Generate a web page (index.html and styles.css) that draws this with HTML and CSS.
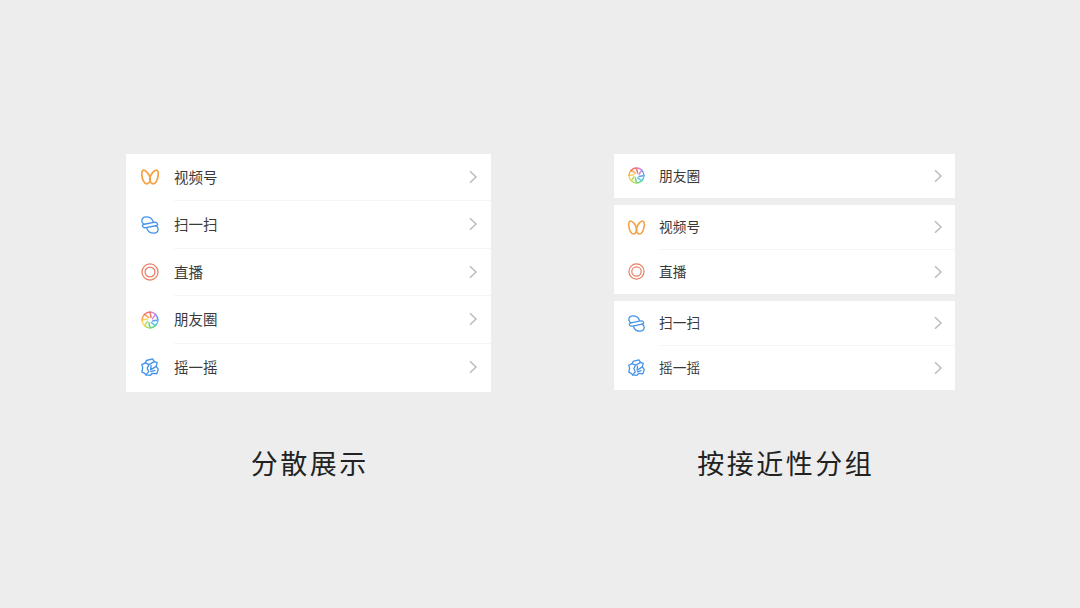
FILE: index.html
```html
<!DOCTYPE html>
<html lang="zh">
<head>
<meta charset="utf-8">
<title>分散展示与按接近性分组</title>
<link rel="stylesheet" href="styles.css">
</head>
<body>
<svg class="defs" aria-hidden="true">
  <symbol id="i-video" viewBox="0 0 20 20">
    <path class="orange" d="M3 2.400C1 2.400.6 5.500.9 8 1.400 12.500 3.500 17.600 6.300 17.600 9.200 17.600 11 14.200 10 10.600 9 7 5.500 2.400 3 2.400Z"/>
    <path class="orange" d="M17 2.400C19 2.400 19.400 5.500 19.100 8 18.600 12.500 16.500 17.600 13.700 17.600 10.800 17.600 9 14.200 10 10.600 11 7 14.500 2.400 17 2.400Z"/>
  </symbol>
  <symbol id="i-scan" viewBox="0 0 20 20">
    <path class="blue" d="M13.500 6.200C12.500 3 9.300.9 5.700.9 2.700.9.700 3 1 5.800 1.200 7.500 2.300 8.700 3.500 9.200"/>
    <path class="blue" d="M3.500 9.200 14.500 7C17 6.600 18.500 7.800 18.400 9.300 18.300 10.200 17.600 10.600 16.500 10.800L5.500 13C3 13.400 1.500 12.200 1.600 10.700 1.700 9.900 2.400 9.400 3.500 9.200Z"/>
    <path class="blue" d="M6.500 13.800C7.500 17 10.700 19.100 14.300 19.100 17.300 19.100 19.300 17 19 14.200 18.800 12.500 17.700 11.300 16.500 10.800"/>
  </symbol>
  <symbol id="i-live" viewBox="0 0 20 20">
    <circle class="coral" cx="10" cy="10" r="8.900"/>
    <circle class="coral" cx="10" cy="10" r="5.500"/>
  </symbol>
  <symbol id="i-moments" viewBox="0 0 20 20">
    <path class="seg c1" d="M10 1.200A8.800 8.800 0 0 1 16.200 3.800L12.800 8.500"/>
    <path class="seg c2" d="M16.200 3.800A8.800 8.800 0 0 1 18.800 10L13 11.200"/>
    <path class="seg c3" d="M18.800 10A8.800 8.800 0 0 1 16.200 16.200L11.500 12.800"/>
    <path class="seg c4" d="M16.200 16.200A8.800 8.800 0 0 1 10 18.800L8.800 13"/>
    <path class="seg c5" d="M10 18.800A8.800 8.800 0 0 1 3.800 16.200L7.200 11.500"/>
    <path class="seg c6" d="M3.800 16.200A8.800 8.800 0 0 1 1.200 10L7 8.800"/>
    <path class="seg c7" d="M1.200 10A8.800 8.800 0 0 1 3.800 3.800L8.500 7.200"/>
    <path class="seg c8" d="M3.800 3.800A8.800 8.800 0 0 1 10 1.200L11.200 7"/>
  </symbol>
  <symbol id="i-shake" viewBox="0 0 20 20">
    <path class="blue" d="M6 2.800 12.800.9 14.800 4 18 5.200 16.800 9.300 19.200 12.400 17.500 17.500 12.400 17 10.500 19.200 5.500 18.800 3.600 16.700 1 15.700 1.900 10.700.9 7.300 4.900 5.400Z"/>
    <path class="blue" d="M4.900 5.400 8.900 7.300 14.800 4"/>
    <path class="blue" d="M8.900 7.300 6.900 11.300 8.600 15.200 5.500 18.800"/>
    <path class="blue" d="M11.200 8.400 10.700 13.200 16.800 9.300"/>
    <path class="blue" d="M11 15.200 15.500 13.800"/>
  </symbol>
  <symbol id="i-chevron" viewBox="0 0 10 14">
    <path class="chevron-line" d="M2 1.200 8 7 2 12.800"/>
  </symbol>
</svg>

<main class="stage">
  <section class="panel panel-wide">
    <div class="group">
      <div class="row"><svg class="icon"><use href="#i-video"/></svg><div class="row-body"><span class="label">视频号</span><svg class="chevron"><use href="#i-chevron"/></svg></div></div>
      <div class="row"><svg class="icon"><use href="#i-scan"/></svg><div class="row-body"><span class="label">扫一扫</span><svg class="chevron"><use href="#i-chevron"/></svg></div></div>
      <div class="row"><svg class="icon"><use href="#i-live"/></svg><div class="row-body"><span class="label">直播</span><svg class="chevron"><use href="#i-chevron"/></svg></div></div>
      <div class="row"><svg class="icon"><use href="#i-moments"/></svg><div class="row-body"><span class="label">朋友圈</span><svg class="chevron"><use href="#i-chevron"/></svg></div></div>
      <div class="row"><svg class="icon"><use href="#i-shake"/></svg><div class="row-body"><span class="label">摇一摇</span><svg class="chevron"><use href="#i-chevron"/></svg></div></div>
    </div>
    <h2 class="caption">分散展示</h2>
  </section>

  <section class="panel panel-narrow">
    <div class="groups">
      <div class="group">
        <div class="row"><svg class="icon"><use href="#i-moments"/></svg><div class="row-body"><span class="label">朋友圈</span><svg class="chevron"><use href="#i-chevron"/></svg></div></div>
      </div>
      <div class="group">
        <div class="row"><svg class="icon"><use href="#i-video"/></svg><div class="row-body"><span class="label">视频号</span><svg class="chevron"><use href="#i-chevron"/></svg></div></div>
        <div class="row"><svg class="icon"><use href="#i-live"/></svg><div class="row-body"><span class="label">直播</span><svg class="chevron"><use href="#i-chevron"/></svg></div></div>
      </div>
      <div class="group">
        <div class="row"><svg class="icon"><use href="#i-scan"/></svg><div class="row-body"><span class="label">扫一扫</span><svg class="chevron"><use href="#i-chevron"/></svg></div></div>
        <div class="row"><svg class="icon"><use href="#i-shake"/></svg><div class="row-body"><span class="label">摇一摇</span><svg class="chevron"><use href="#i-chevron"/></svg></div></div>
      </div>
    </div>
    <h2 class="caption">按接近性分组</h2>
  </section>
</main>
</body>
</html>
```

FILE: styles.css
```css
* { box-sizing: border-box; }

html, body {
  margin: 0;
  width: 1080px;
  height: 608px;
  overflow: hidden;
  background: #ededed;
  font-family: "Noto Sans CJK SC", "Liberation Sans", sans-serif;
}

.defs { display: none; }

.stage {
  display: flex;
  gap: 123px;
  padding: 153.5px 0 0 126px;
}

.panel { display: flex; flex-direction: column; }
.panel-wide { width: 365px; --row: 47.5px; --icon: 18px; --inset: 15px; --text-gap: 15px; --font: 14.5px; --chev-right: 13px; --caption-top: 51px; }
.panel-wide .group { padding-bottom: 1px; }
.panel-narrow { width: 341px; --row: 44.5px; --icon: 17px; --inset: 14px; --text-gap: 14px; --font: 13.7px; --chev-right: 12.5px; --caption-top: 52.5px; }

.groups { display: flex; flex-direction: column; gap: 7px; }

.group { background: #fff; }

.row {
  display: flex;
  align-items: center;
  height: var(--row);
  padding-left: var(--inset);
}

.icon {
  flex: none;
  width: var(--icon);
  height: var(--icon);
  margin-right: var(--text-gap);
}

.row-body {
  flex: 1;
  height: 100%;
  display: flex;
  align-items: center;
  justify-content: space-between;
  padding-right: var(--chev-right);
  border-bottom: 1px solid #f5f5f5;
}

.row:last-child .row-body { border-bottom: 0; }

.label {
  font-size: var(--font);
  color: #3a3a3a;
  line-height: 1;
}

.chevron { flex: none; width: 10px; height: 14px; }

.chevron-line {
  fill: none;
  stroke: #bcbcbc;
  stroke-width: 1.5;
}

.orange, .blue, .coral, .seg {
  fill: none;
  stroke-linejoin: round;
  stroke-linecap: round;
}
.orange { stroke: #f5a145; stroke-width: 1.9; }
.blue { stroke: #4493ea; stroke-width: 1.5; }
.coral { stroke: #ea7d64; stroke-width: 1.4; }
.seg { stroke-width: 1.7; }
.c1 { stroke: #d584dc; }
.c2 { stroke: #6f9cf2; }
.c3 { stroke: #52c8e6; }
.c4 { stroke: #62d68a; }
.c5 { stroke: #b2e05c; }
.c6 { stroke: #f8d55c; }
.c7 { stroke: #f8a552; }
.c8 { stroke: #f27470; }

.caption {
  margin: var(--caption-top) 0 0;
  padding-left: 2.5px;
  text-align: center;
  font-size: 27px;
  font-weight: 400;
  letter-spacing: 2.5px;
  line-height: 40px;
  color: #222;
}
```
